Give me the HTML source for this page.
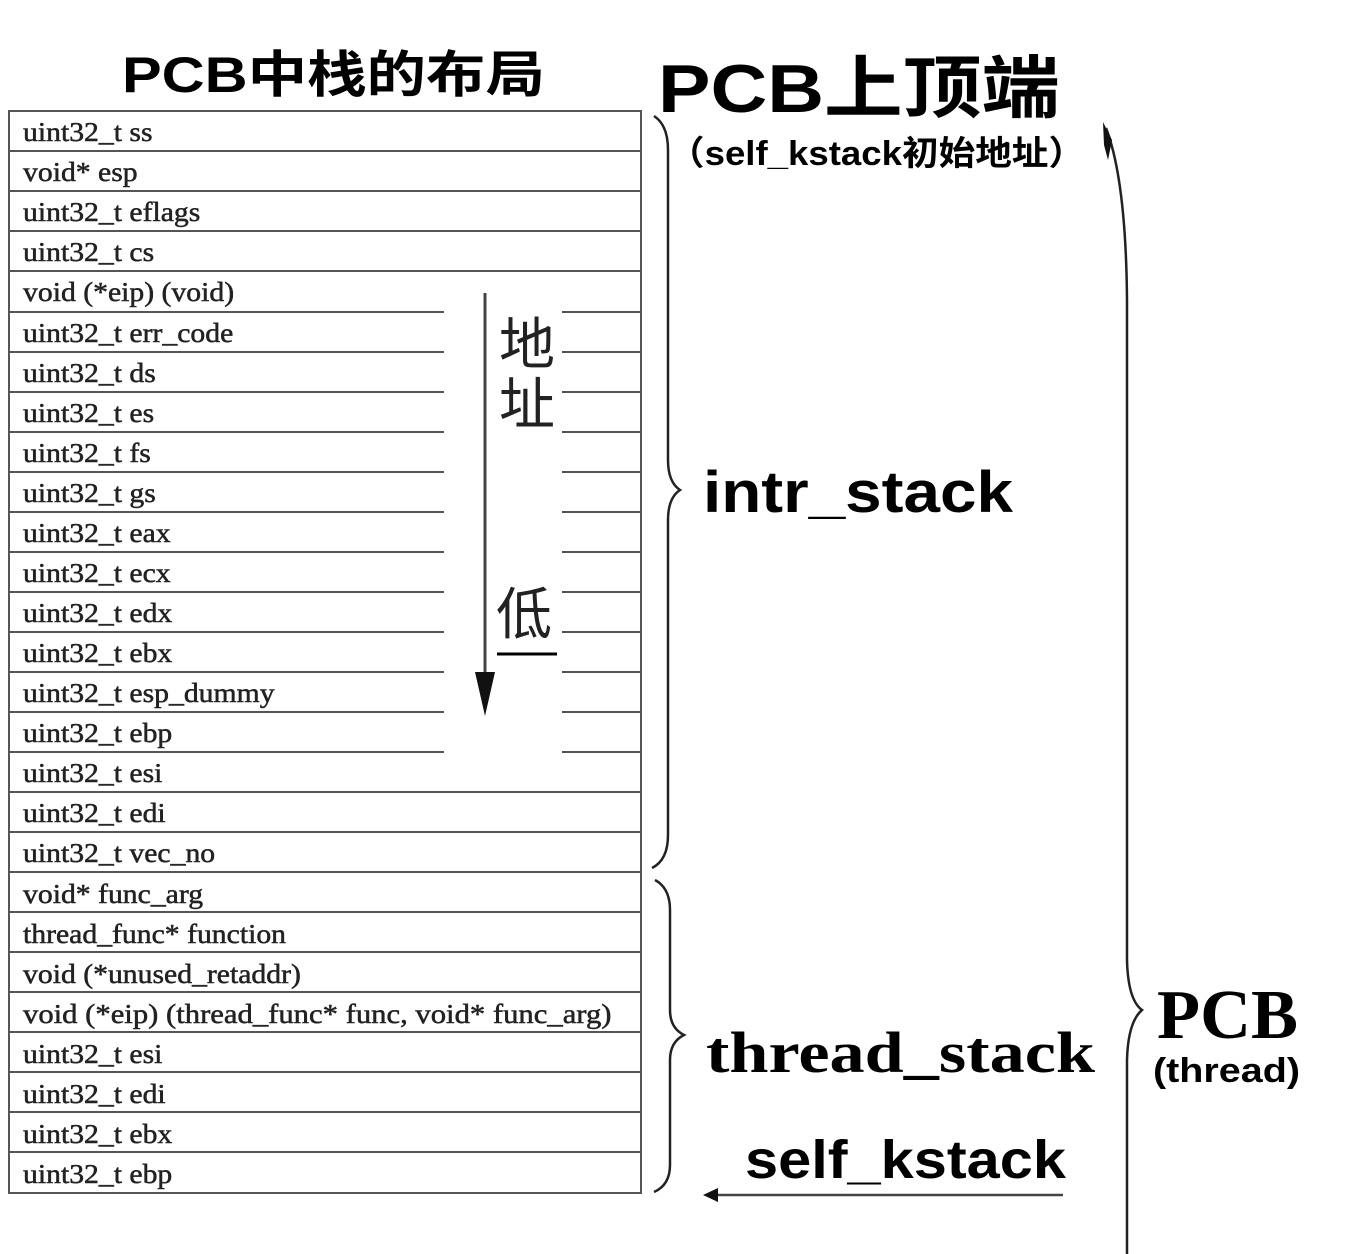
<!DOCTYPE html>
<html><head><meta charset="utf-8"><style>
html,body{margin:0;padding:0;background:#fff;}
svg{display:block}
.r{font-family:"Liberation Serif","Noto Serif CJK SC",serif;font-size:27px;fill:#222;stroke:#222;stroke-width:0.5}
.s{font-family:"Liberation Sans","Noto Sans CJK SC",sans-serif;font-weight:bold;fill:#000}
</style></head><body>
<svg width="1364" height="1254" viewBox="0 0 1364 1254" xmlns="http://www.w3.org/2000/svg">
<rect x="0" y="0" width="1364" height="1254" fill="#fff"/>
<g stroke="#555" stroke-width="2" fill="none">
<rect x="9" y="111" width="632" height="1082"/>
<line x1="9" y1="151" x2="641" y2="151"/>
<line x1="9" y1="191" x2="641" y2="191"/>
<line x1="9" y1="231" x2="641" y2="231"/>
<line x1="9" y1="271" x2="641" y2="271"/>
<line x1="9" y1="312" x2="444" y2="312"/><line x1="562" y1="312" x2="641" y2="312"/>
<line x1="9" y1="352" x2="444" y2="352"/><line x1="562" y1="352" x2="641" y2="352"/>
<line x1="9" y1="392" x2="444" y2="392"/><line x1="562" y1="392" x2="641" y2="392"/>
<line x1="9" y1="432" x2="444" y2="432"/><line x1="562" y1="432" x2="641" y2="432"/>
<line x1="9" y1="472" x2="444" y2="472"/><line x1="562" y1="472" x2="641" y2="472"/>
<line x1="9" y1="512" x2="444" y2="512"/><line x1="562" y1="512" x2="641" y2="512"/>
<line x1="9" y1="552" x2="444" y2="552"/><line x1="562" y1="552" x2="641" y2="552"/>
<line x1="9" y1="592" x2="444" y2="592"/><line x1="562" y1="592" x2="641" y2="592"/>
<line x1="9" y1="632" x2="444" y2="632"/><line x1="562" y1="632" x2="641" y2="632"/>
<line x1="9" y1="672" x2="444" y2="672"/><line x1="562" y1="672" x2="641" y2="672"/>
<line x1="9" y1="712" x2="444" y2="712"/><line x1="562" y1="712" x2="641" y2="712"/>
<line x1="9" y1="752" x2="444" y2="752"/><line x1="562" y1="752" x2="641" y2="752"/>
<line x1="9" y1="792" x2="641" y2="792"/>
<line x1="9" y1="832" x2="641" y2="832"/>
<line x1="9" y1="872" x2="641" y2="872"/>
<line x1="9" y1="912" x2="641" y2="912"/>
<line x1="9" y1="952" x2="641" y2="952"/>
<line x1="9" y1="992" x2="641" y2="992"/>
<line x1="9" y1="1032" x2="641" y2="1032"/>
<line x1="9" y1="1072" x2="641" y2="1072"/>
<line x1="9" y1="1112" x2="641" y2="1112"/>
<line x1="9" y1="1152" x2="641" y2="1152"/>
</g>
<g class="r" transform="translate(23 0) scale(1.1 1)">
<text x="0" y="141">uint32_t ss</text>
<text x="0" y="181">void* esp</text>
<text x="0" y="221">uint32_t eflags</text>
<text x="0" y="261">uint32_t cs</text>
<text x="0" y="301">void (*eip) (void)</text>
<text x="0" y="342">uint32_t err_code</text>
<text x="0" y="382">uint32_t ds</text>
<text x="0" y="422">uint32_t es</text>
<text x="0" y="462">uint32_t fs</text>
<text x="0" y="502">uint32_t gs</text>
<text x="0" y="542">uint32_t eax</text>
<text x="0" y="582">uint32_t ecx</text>
<text x="0" y="622">uint32_t edx</text>
<text x="0" y="662">uint32_t ebx</text>
<text x="0" y="702">uint32_t esp_dummy</text>
<text x="0" y="742">uint32_t ebp</text>
<text x="0" y="782">uint32_t esi</text>
<text x="0" y="822">uint32_t edi</text>
<text x="0" y="862">uint32_t vec_no</text>
<text x="0" y="903">void* func_arg</text>
<text x="0" y="943">thread_func* function</text>
<text x="0" y="983">void (*unused_retaddr)</text>
<text x="0" y="1023" textLength="535" lengthAdjust="spacingAndGlyphs">void (*eip) (thread_func* func, void* func_arg)</text>
<text x="0" y="1063">uint32_t esi</text>
<text x="0" y="1103">uint32_t edi</text>
<text x="0" y="1143">uint32_t ebx</text>
<text x="0" y="1183">uint32_t ebp</text>
</g>
<line x1="485" y1="293" x2="485" y2="690" stroke="#444" stroke-width="3"/>
<polygon points="475,672 495,672 485,716" fill="#111"/>
<g font-family="'Noto Sans CJK SC',sans-serif" font-size="56" fill="#222">
<text x="499" y="364">地</text>
<text x="499" y="424">址</text>
<text x="496" y="634">低</text>
</g>
<line x1="497" y1="654" x2="557" y2="654" stroke="#000" stroke-width="3"/>
<g fill="none" stroke="#222" stroke-width="2.5">
<path d="M654,116 Q668,125 668,150 L668,460 Q668,482 680,490 Q668,498 668,520 L668,835 Q668,860 652,868"/>
<path d="M655,880 Q670,888 670,910 L670,1010 Q670,1028 684,1035 Q670,1042 670,1060 L670,1165 Q670,1185 654,1192"/>
<path d="M1106,128 Q1126,180 1127,300 L1127,960 Q1128,1000 1142,1010 Q1128,1022 1127,1060 L1127,1254"/>
</g>
<polygon points="1103,122 1112,140 1108,160 1104,145" fill="#111"/>
<text class="s" x="122" y="92" font-size="50" textLength="423" lengthAdjust="spacingAndGlyphs">PCB中栈的布局</text>
<text class="s" x="658" y="112" font-size="68" textLength="402" lengthAdjust="spacingAndGlyphs">PCB上顶端</text>
<text class="s" x="668" y="165" font-size="34" textLength="417" lengthAdjust="spacingAndGlyphs">（self_kstack初始地址）</text>
<text class="s" x="703" y="512" font-size="58" textLength="310" lengthAdjust="spacingAndGlyphs">intr_stack</text>
<text x="706" y="1072" font-size="58" font-weight="bold" font-family="'Liberation Serif',serif" textLength="389" lengthAdjust="spacingAndGlyphs">thread_stack</text>
<text class="s" x="745" y="1178" font-size="54" textLength="321" lengthAdjust="spacingAndGlyphs">self_kstack</text>
<line x1="715" y1="1195" x2="1063" y2="1195" stroke="#444" stroke-width="2.5"/>
<polygon points="703,1195 718,1188 718,1202" fill="#111"/>
<text x="1157" y="1038" font-size="70" font-weight="bold" font-family="'Liberation Serif',serif" textLength="141" lengthAdjust="spacingAndGlyphs">PCB</text>
<text class="s" x="1153" y="1082" font-size="34" textLength="147" lengthAdjust="spacingAndGlyphs">(thread)</text>
</svg>
</body></html>
